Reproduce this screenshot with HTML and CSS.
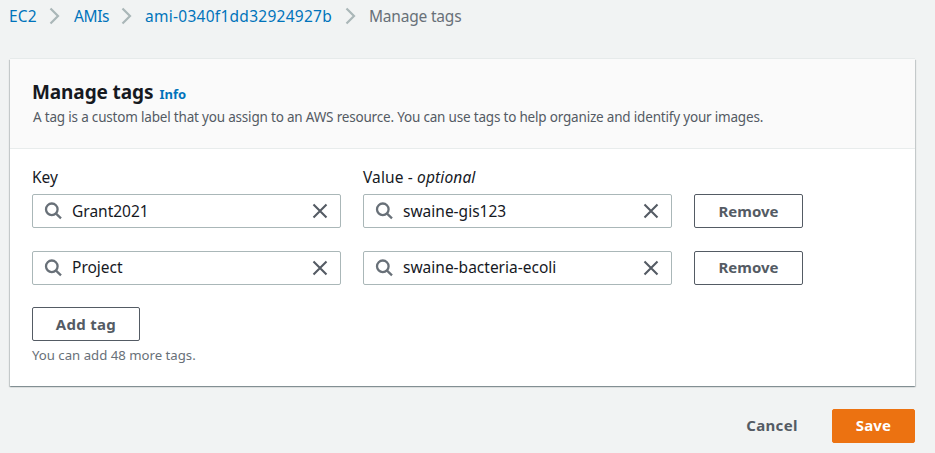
FILE: index.html
```html
<!DOCTYPE html>
<html lang="en">
<head>
<meta charset="utf-8">
<title>Manage tags</title>
<link rel="stylesheet" href="styles.css">
</head>
<body>
<svg class="sprite" aria-hidden="true">
  <symbol id="chevron" viewBox="0 0 12 18"><path d="M1.5 1.5 9 9l-7.5 7.5"/></symbol>
  <symbol id="search" viewBox="0 0 18 18"><circle cx="7.8" cy="7.3" r="5.8"/><path d="m12 11.6 5 4.8"/></symbol>
  <symbol id="close" viewBox="0 0 16 16"><path d="m1.5 1.5 13 13m0-13-13 13"/></symbol>
</svg>
<nav class="breadcrumb">
  <a class="crumb crumb-service" href="#">EC2</a>
  <svg class="chevron"><use href="#chevron"/></svg>
  <a class="crumb crumb-list" href="#">AMIs</a>
  <svg class="chevron"><use href="#chevron"/></svg>
  <a class="crumb crumb-id" href="#">ami-0340f1dd32924927b</a>
  <svg class="chevron"><use href="#chevron"/></svg>
  <span class="crumb crumb-current">Manage tags</span>
</nav>
<main class="card">
  <header class="card-header">
    <div class="heading"><h1>Manage tags</h1><a class="info" href="#">Info</a></div>
    <p class="description">A tag is a custom label that you assign to an AWS resource. You can use tags to help organize and identify your images.</p>
  </header>
  <section class="card-body">
    <div class="labels"><span class="label-key">Key</span><span class="label-value">Value - <em>optional</em></span></div>
    <div class="tag-row">
      <div class="field"><svg class="search"><use href="#search"/></svg><span class="text">Grant2021</span><svg class="close"><use href="#close"/></svg></div>
      <div class="field"><svg class="search"><use href="#search"/></svg><span class="text">swaine-gis123</span><svg class="close"><use href="#close"/></svg></div>
      <button class="button remove">Remove</button>
    </div>
    <div class="tag-row">
      <div class="field"><svg class="search"><use href="#search"/></svg><span class="text">Project</span><svg class="close"><use href="#close"/></svg></div>
      <div class="field"><svg class="search"><use href="#search"/></svg><span class="text">swaine-bacteria-ecoli</span><svg class="close"><use href="#close"/></svg></div>
      <button class="button remove">Remove</button>
    </div>
    <button class="button add">Add tag</button>
    <p class="hint">You can add 48 more tags.</p>
  </section>
</main>
<footer class="actions">
  <button class="button cancel">Cancel</button>
  <button class="button save">Save</button>
</footer>
</body>
</html>
```
FILE: styles.css
```css
* { box-sizing: border-box; }
body {
  margin: 0;
  height: 453px;
  overflow: hidden;
  background: #f1f3f3;
  color: #16191f;
  font: 15.5px/22px "Noto Sans", "Open Sans", sans-serif;
}
h1, p { margin: 0; }
a { color: #0073bb; text-decoration: none; }
svg { flex: none; fill: none; }
.sprite { display: none; }

.breadcrumb { display: flex; align-items: center; height: 32px; padding-left: 9px; white-space: nowrap; }
.crumb { flex: none; }
.crumb-service { width: 28px; letter-spacing: 0.2px; }
.crumb-list { width: 35px; margin-left: 1px; letter-spacing: -0.4px; }
.crumb-id { width: 188px; letter-spacing: 0.27px; }
.crumb-current { color: #687078; letter-spacing: -0.2px; }
.chevron { width: 12px; height: 18px; margin: 0 12px; stroke: #aab7b8; stroke-width: 2.2; }

.card {
  width: 905px;
  height: 327px;
  margin: 27px 0 0 10px;
  background: #fff;
  box-shadow: 0 1px 1px rgba(0, 28, 36, .25), 1px 1px 1px rgba(0, 28, 36, .15), -1px 1px 1px rgba(0, 28, 36, .15), 0 -1px 0 #e6eaea;
}
.card-header { height: 90px; padding: 20px 22px 0; background: #fafafa; border-bottom: 1px solid #e8ecec; }
.heading { display: flex; align-items: baseline; gap: 6px; height: 27px; }
h1 { font-size: 19px; line-height: 26px; letter-spacing: -0.1px; }
.info { font-size: 13px; font-weight: 700; line-height: 20px; }
.description { padding-left: 1px; font-size: 13.5px; color: #545b64; letter-spacing: -0.19px; white-space: nowrap; }

.card-body { padding: 17px 22px 0; }
.labels { display: grid; grid-template-columns: 331px 1fr; height: 28px; }
.label-value { letter-spacing: 0.13px; }
.tag-row { display: grid; grid-template-columns: 309px 309px 109px; gap: 22px; margin-bottom: 23px; }
.tag-row + .tag-row { margin-bottom: 22px; }
.tag-row + .tag-row .text, .tag-row + .tag-row .button { padding-bottom: 2px; }
.field {
  display: flex;
  align-items: center;
  height: 34px;
  padding: 0 12px 0 11px;
  border: 1px solid #aab7b8;
  border-radius: 2px;
  white-space: nowrap;
}
.search { width: 18px; height: 18px; margin-right: 10px; stroke: #687078; stroke-width: 2.3; }
.close { width: 16px; height: 16px; margin-left: auto; stroke: #545b64; stroke-width: 2.1; }
.button {
  height: 34px;
  padding: 0;
  border: 1px solid #545b64;
  border-radius: 2px;
  background: #fff;
  color: #545b64;
  font: 700 15px/22px "Noto Sans", "Open Sans", sans-serif;
}
.add { display: block; width: 108px; letter-spacing: 0.3px; }
.hint { margin-top: 3px; color: #687078; font-size: 13.2px; white-space: nowrap; }
.actions { display: flex; justify-content: flex-end; gap: 10px; padding: 23px 20px 0 0; }
.cancel { width: 100px; padding-bottom: 2px; border-color: transparent; background: transparent; letter-spacing: 0.3px; }
.save { width: 83px; padding-bottom: 2px; border-color: #ec7211; background: #ec7211; color: #fff; letter-spacing: 0.2px; }
```
